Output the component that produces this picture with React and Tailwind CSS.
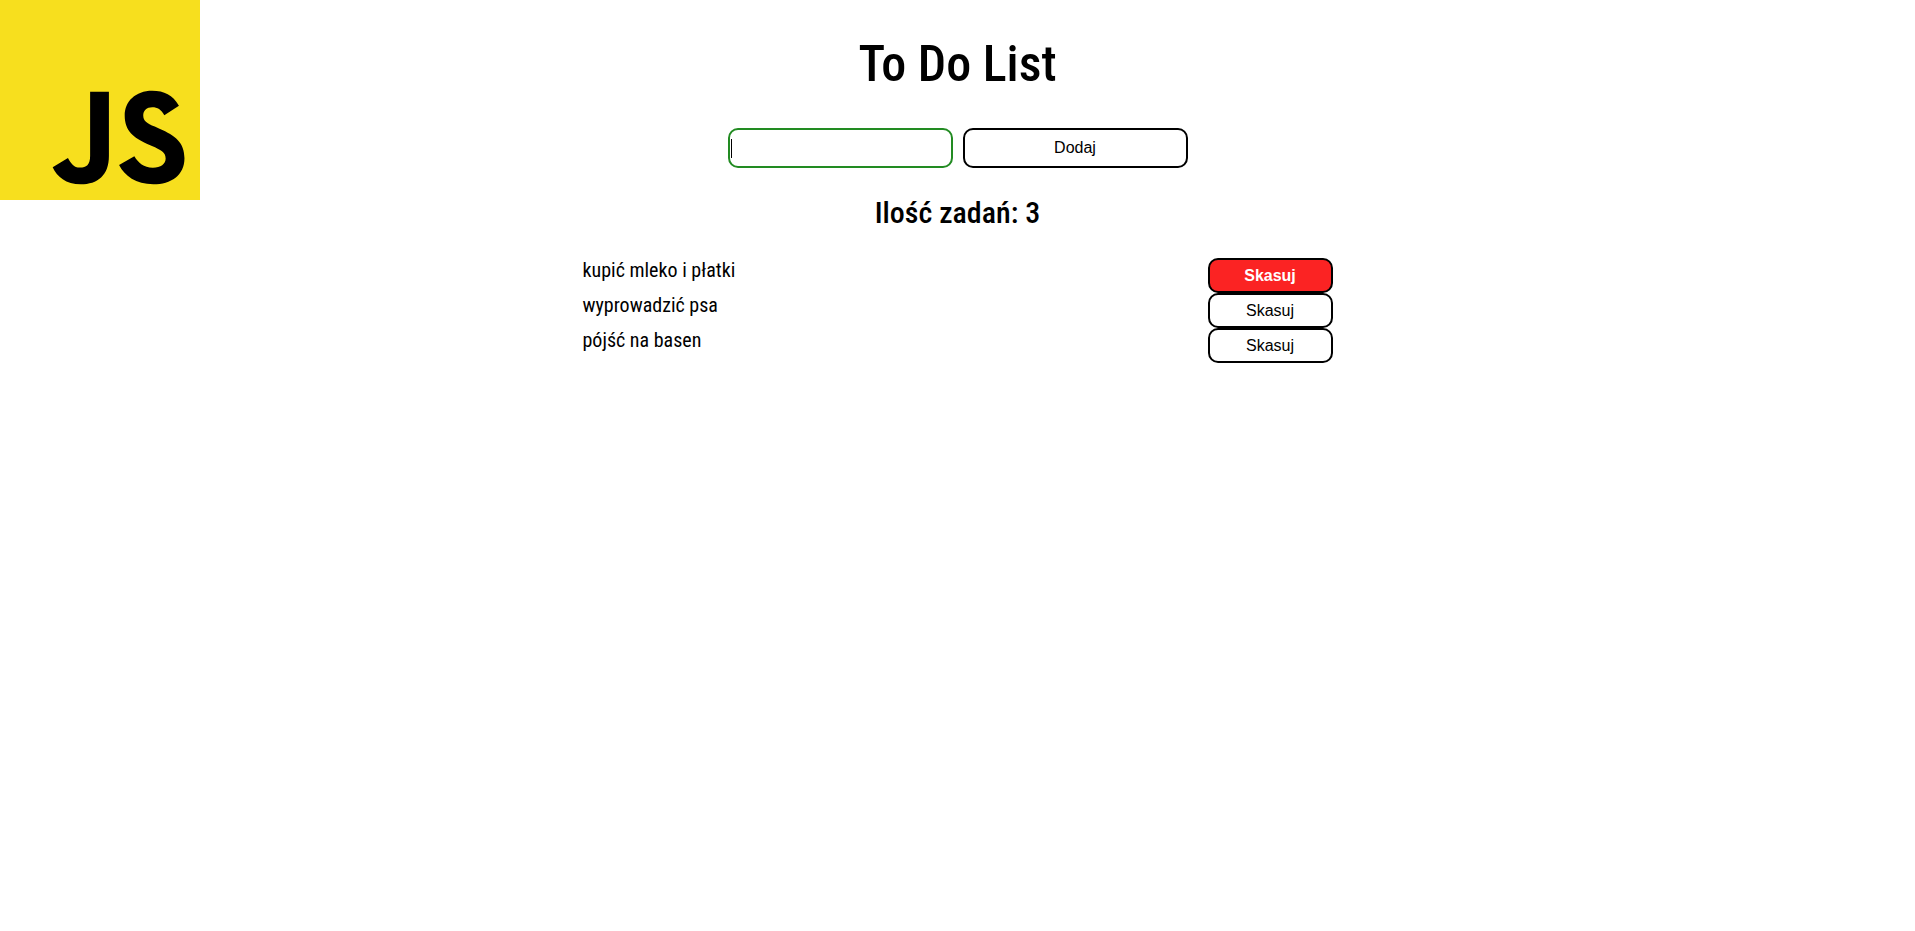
import { useState } from "react";

function JsLogo() {
  return (
    <svg viewBox="0 0 630 630" className="size-[200px]" role="img" aria-label="JavaScript">
      <rect width="630" height="630" fill="#f7df1e" />
      <path d="m423.2 492.19c12.69 20.72 29.2 35.95 58.4 35.95 24.53 0 40.2-12.26 40.2-29.2 0-20.3-16.1-27.49-43.1-39.3l-14.8-6.35c-42.72-18.2-71.1-41-71.1-89.2 0-44.4 33.83-78.2 86.7-78.2 37.64 0 64.7 13.1 84.2 47.4l-46.1 29.6c-10.15-18.2-21.1-25.37-38.1-25.37-17.34 0-28.33 11-28.33 25.37 0 17.76 11 24.95 36.4 35.95l14.8 6.34c50.3 21.57 78.7 43.56 78.7 93 0 53.3-41.87 82.5-98.1 82.5-54.98 0-90.5-26.2-107.88-60.54zm-209.13 5.13c9.3 16.5 17.76 30.45 38.1 30.45 19.45 0 31.72-7.61 31.72-37.2v-201.3h59.2v202.1c0 61.3-35.94 89.2-88.4 89.2-47.4 0-74.85-24.53-88.81-54.075z" />
    </svg>
  );
}

export default function App() {
  const [tasks, setTasks] = useState(["kupić mleko i płatki", "wyprowadzić psa", "pójść na basen"]);
  const [text, setText] = useState("");
  const [active, setActive] = useState(0);

  const add = (e) => {
    e.preventDefault();
    if (!text.trim()) return;
    setTasks([...tasks, text.trim()]);
    setText("");
  };

  return (
    <div className="relative min-h-screen bg-white font-['Roboto_Condensed',Roboto,sans-serif] text-black">
      <div className="absolute top-0 left-0">
        <JsLogo />
      </div>
      <main className="flex flex-col items-center pt-8">
        <h1 className="text-[50px] leading-[64px] font-medium">To Do List</h1>
        <form onSubmit={add} className="mt-8 flex gap-2.5">
          <div className="relative">
            <input
              type="text"
              aria-label="Nowe zadanie"
              value={text}
              onChange={(e) => setText(e.target.value)}
              className="h-10 w-[225px] rounded-[10px] border-2 border-[#228b22] px-px font-['Liberation_Sans',Arial,sans-serif] text-base outline-none"
            />
            {text === "" && <span aria-hidden="true" className="pointer-events-none absolute top-[11px] left-[3px] h-[19px] w-px bg-black" />}
          </div>
          <button
            type="submit"
            className="h-10 w-[225px] rounded-[10px] border-2 border-black font-['Liberation_Sans',Arial,sans-serif] text-base"
          >
            Dodaj
          </button>
        </form>
        <h2 className="mt-6 text-[30px] leading-[42px] font-medium">Ilość zadań: {tasks.length}</h2>
        <ul className="mt-6 w-full max-w-[750px]">
          {tasks.map((task, i) => (
            <li key={task} className="flex justify-between">
              <span className="text-xl leading-6">{task}</span>
              <button
                type="button"
                onMouseEnter={() => setActive(i)}
                onClick={() => setTasks(tasks.filter((t) => t !== task))}
                className={
                  i === active
                    ? "h-[35px] w-[125px] rounded-[10px] border-2 border-black bg-[#fb2323] font-['Liberation_Sans',Arial,sans-serif] text-base font-bold text-white"
                    : "h-[35px] w-[125px] rounded-[10px] border-2 border-black bg-white font-['Liberation_Sans',Arial,sans-serif] text-base"
                }
              >
                Skasuj
              </button>
            </li>
          ))}
        </ul>
      </main>
    </div>
  );
}
